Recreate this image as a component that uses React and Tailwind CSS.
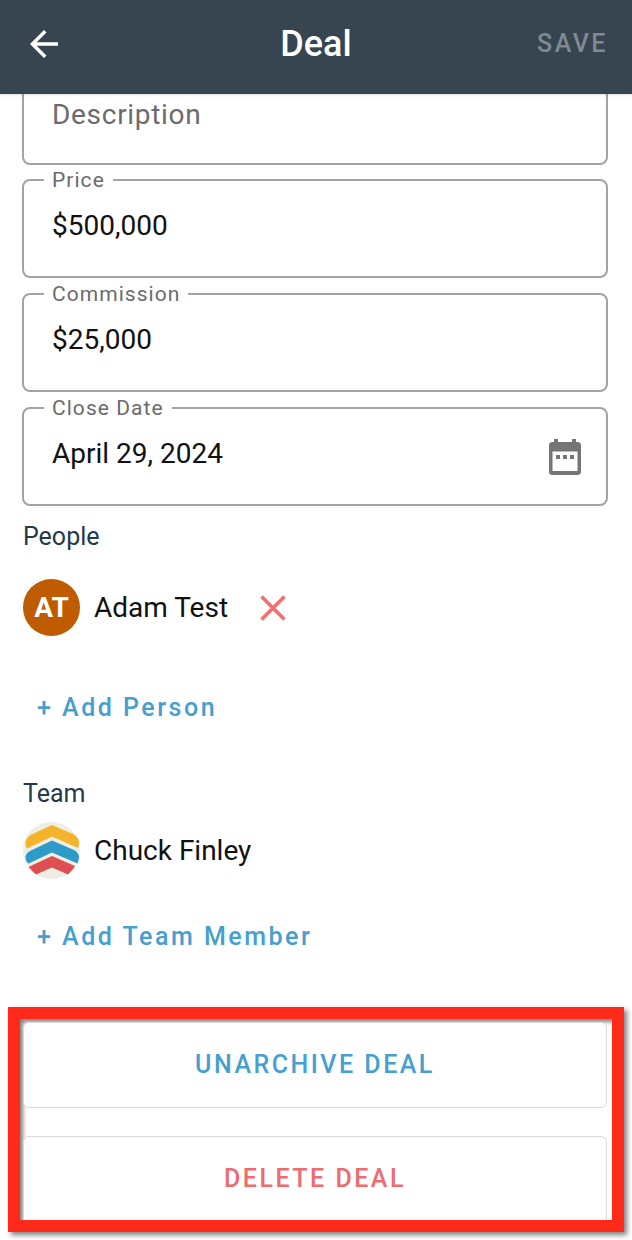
import { useState } from 'react';

function BackIcon() {
  return (
    <svg viewBox="4 4 16 16" className="w-7 h-7" fill="currentColor" aria-hidden="true">
      <path d="M20 11H7.83l5.59-5.59L12 4l-8 8 8 8 1.41-1.41L7.83 13H20v-2z" />
    </svg>
  );
}

function CalendarIcon() {
  return (
    <svg viewBox="0 0 32 36" className="w-8 h-9" fill="#757575" aria-hidden="true">
      <path d="M5 0h4v3h14V0h4v3h1.500a3.500 3.500 0 0 1 3.500 3.500v26a3.500 3.500 0 0 1-3.500 3.500h-25A3.500 3.500 0 0 1 0 32.500v-26A3.500 3.500 0 0 1 3.500 3H5V0zM3.500 12.500V32h25V12.500h-25z" fillRule="evenodd" />
      <path d="M7 16h4v4H7zM14 16h4v4h-4zM21 16h4v4h-4z" />
    </svg>
  );
}

function CloseIcon() {
  return (
    <svg viewBox="0 0 26 26" className="w-[26px] h-[26px]" stroke="currentColor" strokeWidth="3.6" aria-hidden="true">
      <path d="M1.500 1.500l23 23M24.500 1.500l-23 23" />
    </svg>
  );
}

function TeamLogo() {
  return (
    <svg viewBox="0 0 57 57" className="w-[57px] h-[57px] shrink-0" aria-hidden="true">
      <circle cx="28.500" cy="28.500" r="28.500" fill="#efeee3" />
      <path d="M29 3L50 12q5.500 3 6 7.500 0 4-1 6.500L29 14.500 4 26.500q-1.500-2-1.500-5.500 .5-5 5-8z" fill="#f3b32a" />
      <path d="M29 18.500L51 28q4.500 2.500 5 6.500 0 4-1.500 7L29 30.500 5.500 41.500Q2.500 39 2.500 35q.5-4 4.500-6z" fill="#2e9aca" />
      <path d="M29 34L52 44q-2 4-7 8.500L29 45.500 13 52.500q-4-3.500-7.500-7.500z" fill="#de4f51" />
    </svg>
  );
}

function Field({ id, label, value, onChange, children }) {
  return (
    <fieldset className="min-w-0 h-[110px] mb-1 pl-5 pr-[25px] border-2 border-[#a3a3a3] rounded-lg">
      <legend className="px-2 text-[21px] leading-6 tracking-wider text-[#6b6b6b]">
        <label htmlFor={id}>{label}</label>
      </legend>
      <div className="flex items-center pl-2 pt-[11px]">
        <input
          id={id}
          type="text"
          value={value}
          onChange={(e) => onChange(e.target.value)}
          className="min-w-0 flex-1 h-11 text-[28px] text-[#111] outline-none"
        />
        {children}
      </div>
    </fieldset>
  );
}

export default function App() {
  const [description, setDescription] = useState('');
  const [price, setPrice] = useState('$500,000');
  const [commission, setCommission] = useState('$25,000');
  const [closeDate, setCloseDate] = useState('April 29, 2024');
  const [people, setPeople] = useState([{ id: 1, name: 'Adam Test', initials: 'AT' }]);

  const removePerson = (id) => {
    setPeople(prev => prev.filter(person => person.id !== id));
  };

  return (
    <div className="min-h-screen bg-white font-['Roboto',sans-serif]">
      {/* Header */}
      <header className="sticky top-0 z-10 grid grid-cols-3 items-center h-[94px] px-6 pb-1.5 bg-[#36454f] text-white shadow">
        <button type="button" aria-label="Back" className="justify-self-start pl-1.5">
          <BackIcon />
        </button>
        <h1 className="text-center text-[36px] font-medium">Deal</h1>
        <button type="button" disabled className="justify-self-end text-[25px] font-medium tracking-widest text-[#7f8a92]">
          SAVE
        </button>
      </header>

      <main>
        <form className="pl-[22px] pr-6" onSubmit={(e) => e.preventDefault()}>
          <div className="h-[71px] mb-[3px] px-7 border-2 border-t-0 border-[#a3a3a3] rounded-b-lg">
            <input
              type="text"
              aria-label="Description"
              placeholder="Description"
              value={description}
              onChange={(e) => setDescription(e.target.value)}
              className="w-full h-[42px] text-[28px] tracking-wide text-[#111] placeholder:text-[#6b6b6b] outline-none"
            />
          </div>
          <Field id="price" label="Price" value={price} onChange={setPrice} />
          <Field id="commission" label="Commission" value={commission} onChange={setCommission} />
          <Field id="close-date" label="Close Date" value={closeDate} onChange={setCloseDate}>
            <button type="button" aria-label="Choose date" className="pt-2">
              <CalendarIcon />
            </button>
          </Field>
        </form>

        {/* People */}
        <section className="pl-[23px] pr-6 pt-[11px]">
          <h2 className="text-[25px] leading-8 text-[#24394a]">People</h2>
          {people.map(person => (
            <div key={person.id} className="flex items-center mt-[26px]">
              <span className="flex items-center justify-center w-[57px] h-[57px] rounded-full bg-[#bf5b00] text-[28px] font-bold text-white">
                {person.initials}
              </span>
              <span className="ml-3.5 text-[28px] leading-9 text-[#111]">{person.name}</span>
              <button
                type="button"
                aria-label={`Remove ${person.name}`}
                onClick={() => removePerson(person.id)}
                className="ml-8 text-[#f66f6f]"
              >
                <CloseIcon />
              </button>
            </div>
          ))}
          <button type="button" className="block mt-14 ml-3.5 text-[25px] leading-8 font-medium tracking-widest text-[#469fd0]">
            + Add Person
          </button>
        </section>

        {/* Team */}
        <section className="pl-[23px] pr-6 pt-[54px]">
          <h2 className="text-[25px] leading-8 text-[#24394a]">Team</h2>
          <div className="flex items-center mt-3">
            <TeamLogo />
            <span className="ml-3.5 text-[28px] leading-9 text-[#111]">Chuck Finley</span>
          </div>
          <button type="button" className="block mt-[42px] ml-3.5 text-[25px] leading-8 font-medium tracking-widest text-[#469fd0]">
            + Add Team Member
          </button>
        </section>

        {/* Deal actions */}
        <section className="mx-2 mt-[54px] pt-[3px] pl-[3px] pr-[5px] border-12 border-[#ff2a1a] shadow-[3px_3px_5px_rgba(0,0,0,0.5),inset_3px_3px_4px_rgba(0,0,0,0.5)]">
          <button type="button" className="block w-full h-[86px] bg-white border border-[#dadada] rounded-md text-[25px] font-medium tracking-widest text-[#469fd0]">
            UNARCHIVE DEAL
          </button>
          <button type="button" className="block w-full h-[84px] mt-7 bg-white border border-b-0 border-[#dadada] rounded-t-md text-[25px] font-medium tracking-widest text-[#ee6b6e]">
            DELETE DEAL
          </button>
        </section>
      </main>
    </div>
  );
}
